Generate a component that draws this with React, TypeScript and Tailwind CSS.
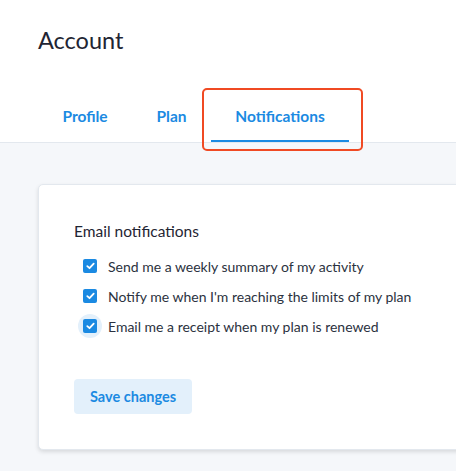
export default function App() {
  const options = [
    { label: "Send me a weekly summary of my activity", focus: false },
    { label: "Notify me when I'm reaching the limits of my plan", focus: false },
    { label: "Email me a receipt when my plan is renewed", focus: true },
  ];

  return (
    <div
      className="w-[456px] h-[471px] overflow-hidden bg-[#f5f7fa]"
      style={{ fontFamily: "Lato, 'Open Sans', sans-serif" }}
    >
      {/* header */}
      <div className="bg-white border-b border-[#e3e8ee] h-[143px] relative">
        <h1 className="absolute left-[38px] top-[25px] text-[23.5px] leading-[30px] text-[#1f2533]">Account</h1>
        <nav className="absolute left-[38px] top-[92px] flex text-[15.5px] font-bold text-[#1b8ae2]">
          <span className="w-[94px] h-[50px] flex items-center justify-center">Profile</span>
          <span className="w-[79px] h-[50px] flex items-center justify-center">Plan</span>
          <span className="w-[138px] h-[50px] flex items-center justify-center border-b-2 border-[#1b8ae2] pt-[2px] relative">
            Notifications
            <span className="absolute -left-[9px] -right-[14px] -top-[4px] -bottom-[11px] border-2 border-[#f04a23] rounded-[5px]" />
          </span>
        </nav>
      </div>

      {/* card */}
      <div className="pl-[38px] pt-[41px]">
        <div className="w-[600px] bg-white rounded-[5px] border border-[#e3e8ee] shadow-[0_2px_4px_rgba(0,0,0,0.12)] pl-[35px] pt-[36px] pb-[35px]">
          <h2 className="text-[15.5px] leading-[20px] text-[#1f2533]">Email notifications</h2>
          <div className="mt-[16px] flex flex-col gap-[12px] pl-[9px]">
            {options.map((o, i) => (
              <label key={i} className="flex items-center gap-[11px] h-[18px] text-[14px] text-[#2b3240]">
                <span className="relative w-[14px] h-[14px] flex items-center justify-center">
                  {o.focus && (
                    <span className="absolute -inset-[5px] rounded-full bg-[#e3f0fb]" />
                  )}
                  <span className="relative w-[14px] h-[14px] rounded-[2px] bg-[#1b8ae2] flex items-center justify-center">
                    <svg width="9" height="8" viewBox="0 0 9 8" fill="none">
                      <path d="M1.3 4.2 L3.5 6.2 L7.7 1.6" stroke="white" strokeWidth="1.8" strokeLinecap="round" strokeLinejoin="round" />
                    </svg>
                  </span>
                </span>
                {o.label}
              </label>
            ))}
          </div>
          <button className="mt-[44px] h-[35px] px-[16px] rounded-[4px] bg-[#e3f0fb] text-[14.5px] font-bold text-[#1b8ae2]">
            Save changes
          </button>
        </div>
      </div>
    </div>
  );
}
